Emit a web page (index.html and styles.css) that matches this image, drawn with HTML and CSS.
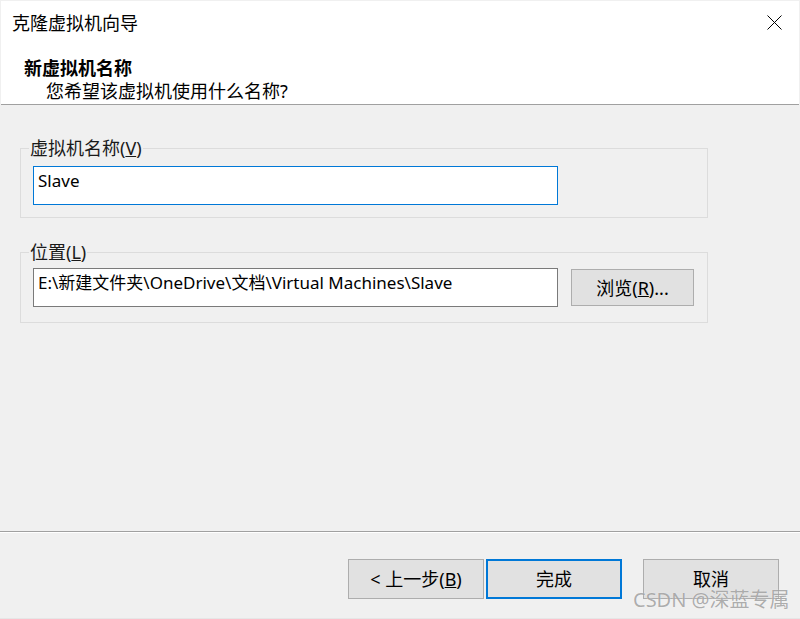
FILE: index.html
```html
<!DOCTYPE html>
<html lang="zh-CN">
<head>
<meta charset="utf-8">
<title>克隆虚拟机向导</title>
<link rel="stylesheet" href="styles.css">
</head>
<body>
<div class="window">
  <header class="header">
    <div class="title-row">
      <div class="title">克隆虚拟机向导</div>
      <svg class="close" width="15" height="15" viewBox="0 0 15 15"><path d="M0.5 0.5L14.5 14.5M14.5 0.5L0.5 14.5" stroke="#000" stroke-width="1" fill="none"/></svg>
    </div>
    <div class="heading">新虚拟机名称</div>
    <div class="subheading">您希望该虚拟机使用什么名称?</div>
  </header>
  <main class="main">
    <fieldset class="group group-name">
      <legend class="legend">虚拟机名称(<u>V</u>)</legend>
      <div class="field field-focus">Slave</div>
    </fieldset>
    <fieldset class="group group-loc">
      <legend class="legend">位置(<u>L</u>)</legend>
      <div class="row">
        <div class="field">E:\新建文件夹\OneDrive\文档\Virtual Machines\Slave</div>
        <div class="btn btn-browse">浏览(<u>R</u>)...</div>
      </div>
    </fieldset>
  </main>
  <footer class="footer">
    <div class="btn btn-wide btn-back">&lt; 上一步(<u>B</u>)</div>
    <div class="btn btn-wide btn-default">完成</div>
    <div class="btn btn-wide">取消</div>
  </footer>
  <div class="watermark">CSDN @深蓝专属</div>
</div>
</body>
</html>
```
FILE: styles.css
```css
* { box-sizing: border-box; }
html, body { margin: 0; padding: 0; }
body {
  background: #f0f0f0;
  font-family: "Noto Sans", "Noto Sans CJK SC", sans-serif;
  font-size: 18px;
  color: #000;
}
.window {
  position: relative;
  width: 800px;
  height: 619px;
  display: flex;
  flex-direction: column;
  background: #f0f0f0;
  border-top: 1px solid #f0f0f0;
  overflow: hidden;
}
.header {
  background: #fff;
  height: 104px;
  margin: 0 1px;
  border-bottom: 1px solid #a0a0a0;
  flex: none;
}
.title-row {
  display: flex;
  justify-content: space-between;
  align-items: flex-start;
  padding: 10px 17px 0 11px;
  height: 34px;
}
.title { line-height: 24px; }
.close { margin-top: 4px; display: block; }
.heading {
  font-weight: bold;
  line-height: 23px;
  padding-left: 23px;
  margin-top: 22px;
}
.subheading {
  line-height: 23px;
  padding-left: 45px;
}
.main {
  flex: 1;
  padding: 32px 0 0 20px;
}
.group {
  width: 688px;
  margin: 0;
  border: 1px solid #dcdcdc;
  padding: 0 12px 12px 12px;
}
.legend {
  line-height: 22px;
  padding: 0 1px;
  margin-left: -4px;
  color: #1a1a1a;
}
.group-name .field { margin-top: 7px; }
.group-loc { margin-top: 23px; padding-bottom: 15px; }
.group-loc .row { margin-top: 5px; }
.field {
  width: 525px;
  height: 39px;
  background: #fff;
  border: 1px solid #7a7a7a;
  padding: 2px 0 0 4px;
  font-size: 17px;
  line-height: 24px;
  white-space: nowrap;
  overflow: hidden;
}
.field-focus { border-color: #0078d7; }
.row {
  display: flex;
  align-items: center;
  gap: 13px;
}
.btn {
  background: #e1e1e1;
  border: 1px solid #adadad;
  display: flex;
  align-items: center;
  justify-content: center;
  line-height: 18px;
}
.btn-browse { width: 123px; height: 37px; }
.footer {
  flex: none;
  height: 88px;
  border-top: 1px solid #a0a0a0;
  box-shadow: inset 0 1px 0 #fff;
  border-bottom: 1px solid #e6e6e6;
  display: flex;
  justify-content: flex-end;
  align-items: flex-start;
  padding: 27px 21px 0 0;
}
.btn-wide { width: 136px; height: 40px; }
.btn-back { margin-right: 2px; }
.btn-default { border: 2px solid #0078d7; margin-right: 21px; }
.watermark {
  position: absolute;
  left: 633px;
  top: 591px;
  font-size: 20px;
  line-height: 16px;
  color: rgba(120, 120, 120, 0.6);
  text-shadow: 0 0 1px rgba(255,255,255,0.8);
  white-space: nowrap;
}
```
